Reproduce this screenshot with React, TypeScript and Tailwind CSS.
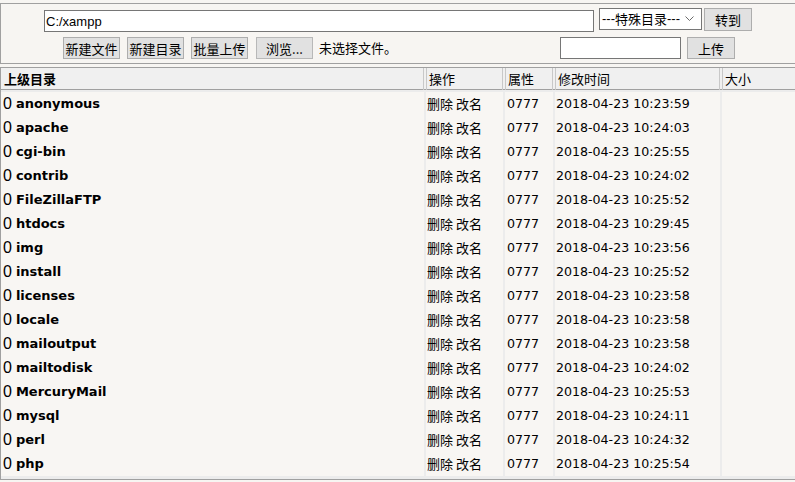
import React from 'react';

const rows = [
    ['anonymous', '2018-04-23 10:23:59'],
    ['apache', '2018-04-23 10:24:03'],
    ['cgi-bin', '2018-04-23 10:25:55'],
    ['contrib', '2018-04-23 10:24:02'],
    ['FileZillaFTP', '2018-04-23 10:25:52'],
    ['htdocs', '2018-04-23 10:29:45'],
    ['img', '2018-04-23 10:23:56'],
    ['install', '2018-04-23 10:25:52'],
    ['licenses', '2018-04-23 10:23:58'],
    ['locale', '2018-04-23 10:23:58'],
    ['mailoutput', '2018-04-23 10:23:58'],
    ['mailtodisk', '2018-04-23 10:24:02'],
    ['MercuryMail', '2018-04-23 10:25:53'],
    ['mysql', '2018-04-23 10:24:11'],
    ['perl', '2018-04-23 10:24:32'],
    ['php', '2018-04-23 10:25:54'],
];

const cjk = "font-['Noto_Sans_CJK_SC',sans-serif]";
const btn = `h-[22px] px-0 whitespace-nowrap bg-[#e1e1e1] border border-[#adadad] text-[13px] leading-none text-black ${cjk}`;
const cols = 'grid grid-cols-[423px_77px_48px_165px_1fr] gap-x-[2px]';

export default function App() {
    return (
        <div className="w-[795px] h-[482px] overflow-hidden bg-[#f7f5f2] font-['Liberation_Sans',sans-serif] text-[13px] text-black">
            {/* Toolbar form */}
            <div className="mt-[3px] h-[61px] border-t border-l border-b border-[#a0a0a0]">
                <div className="flex items-start pl-[43px] pt-[4px]">
                    <input
                        className="w-[550px] h-[22px] mt-[2px] px-[1px] bg-white border border-[#767676] text-[13px] font-['Liberation_Sans',sans-serif] outline-none"
                        defaultValue="C:/xampp"
                    />
                    <div className={`ml-[5px] w-[103px] h-[22px] bg-white border border-[#767676] flex items-center pl-[2px] text-[13px] whitespace-nowrap ${cjk}`}>
                        <span className="font-['Liberation_Sans',sans-serif]">---</span>特殊目录<span className="font-['Liberation_Sans',sans-serif]">---</span>
                        <svg className="ml-[5px]" width="9" height="6" viewBox="0 0 9 6" fill="none" stroke="#6b6b6b" strokeWidth="1">
                            <path d="M0.5 0.5 L4.5 4.5 L8.5 0.5" />
                        </svg>
                    </div>
                    <button className={`${btn} ml-[2px] w-[48px] h-[23px]`}>转到</button>
                </div>
                <div className="flex items-center pl-[62px] mt-[5px]">
                    <button className={`${btn} w-[57px]`}>新建文件</button>
                    <button className={`${btn} ml-[7px] w-[57px]`}>新建目录</button>
                    <button className={`${btn} ml-[7px] w-[57px]`}>批量上传</button>
                    <button className={`${btn} ml-[8px] w-[57px] border-[#b8b8b8]`}>浏览...</button>
                    <span className={`ml-[6px] whitespace-nowrap ${cjk}`}>未选择文件。</span>
                    <input className="ml-[163px] w-[121px] h-[22px] bg-white border border-[#767676] outline-none" />
                    <button className={`${btn} ml-[6px] w-[48px]`}>上传</button>
                </div>
            </div>

            {/* File listing */}
            <div className="mt-[3px] border-t border-l border-b border-[#a0a0a0] bg-[#ececec]">
                <div className={`${cols} h-[22px] bg-[#f0f0f0] border-b border-[#a0a0a0] text-[13px] ${cjk}`}>
                    <div className="pl-[3px] font-bold leading-[22px] border-r border-[#c8c8c8]">上级目录</div>
                    <div className="pl-[2px] leading-[22px] border-l border-r border-[#c8c8c8]">操作</div>
                    <div className="pl-[2px] leading-[22px] border-l border-r border-[#c8c8c8]">属性</div>
                    <div className="pl-[2px] leading-[22px] border-l border-r border-[#c8c8c8]">修改时间</div>
                    <div className="pl-[2px] leading-[22px] border-l border-[#c8c8c8]">大小</div>
                </div>
                <div className="flex flex-col gap-y-[2px] pt-[2px] pb-[5px]">
                    {rows.map(([name, time]) => (
                        <div key={name} className={`${cols} h-[22px] text-[#000]`}>
                            <div className="bg-[#f8f6f3] flex items-center pl-[2px]">
                                <span className="text-[16px] font-['Liberation_Sans',sans-serif] mr-[4px]">0</span>
                                <span className="font-['DejaVu_Sans',sans-serif] font-bold text-[13px]">{name}</span>
                            </div>
                            <div className={`bg-[#f8f6f3] flex items-center pl-[1px] text-[#000] ${cjk}`}>删除 改名</div>
                            <div className="bg-[#f8f6f3] flex items-center pl-[2px] font-['DejaVu_Sans',sans-serif] text-[12.6px]">0777</div>
                            <div className="bg-[#f8f6f3] flex items-center pl-[1px] font-['DejaVu_Sans',sans-serif] text-[12.6px]">{time}</div>
                            <div className="bg-[#f8f6f3]" />
                        </div>
                    ))}
                </div>
            </div>
        </div>
    );
}
